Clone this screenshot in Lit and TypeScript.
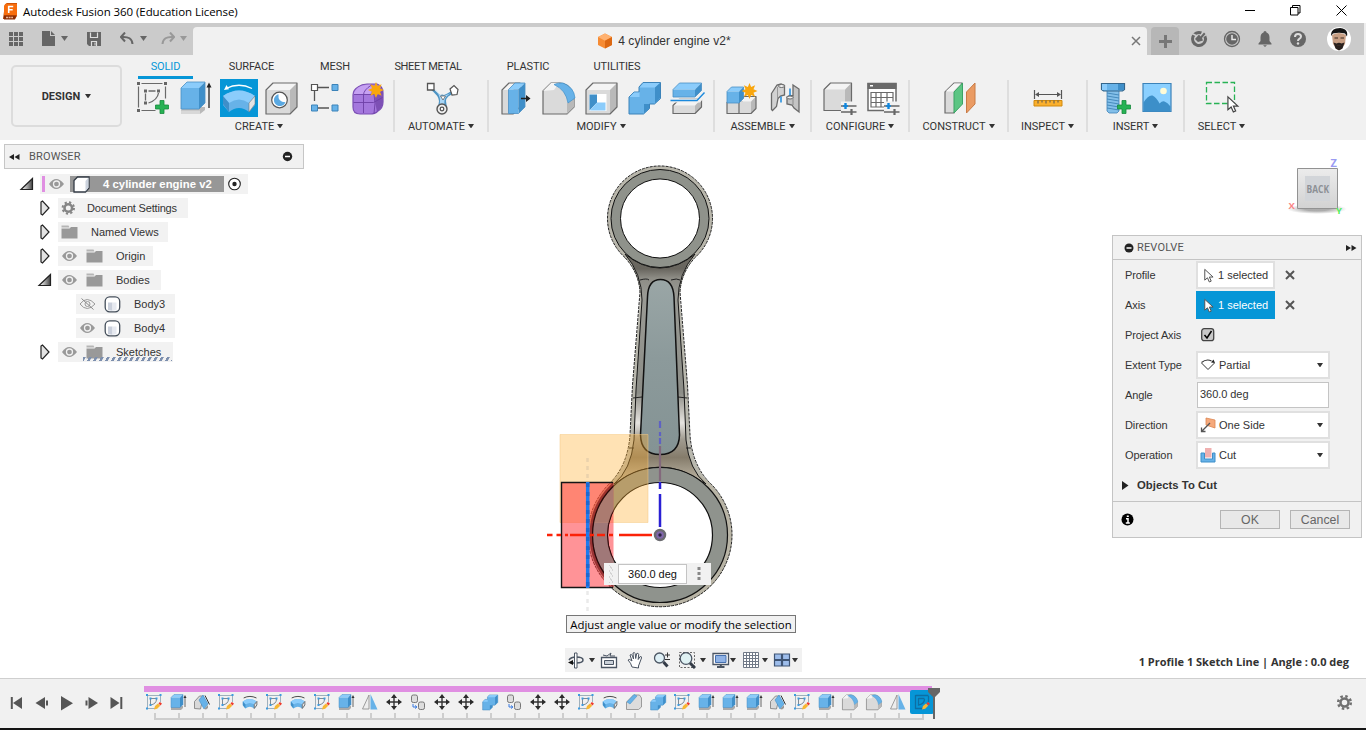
import { LitElement, html, svg, css } from "lit";
import { customElement } from "lit/decorators.js";

const DARK = "#6a6a6a";
const LIGHT = "#8bccfb";
const MID = "#67b2e8";
const DEEP = "#3f8fc9";

// Box seen from the front, with its top and right side visible.
const box = (x: number, y: number, w: number, h: number, d: number, f = "#dadada", t = "#f4f4f4", s = "#b9b9b9", k = DARK, sw = 1.2) => svg`
  <path d="M${x} ${y + d}l${d} ${-d}h${w}l${-d} ${d}z" fill=${t}/>
  <path d="M${x + w} ${y + d}l${d} ${-d}v${h}l${-d} ${d}z" fill=${s}/>
  <path d="M${x} ${y + d}h${w}v${h}h${-w}z" fill=${f}/>
  <path d="M${x} ${y + d}l${d} ${-d}h${w}v${h}l${-d} ${d}h${-w}z" fill="none" stroke=${k} stroke-width=${sw} stroke-linejoin="round"/>`;
const blueBox = (x: number, y: number, w: number, h: number, d: number, sw = 0.8) => box(x, y, w, h, d, MID, LIGHT, DEEP, "#4a8fc4", sw);
const plus = (x: number, y: number) => svg`<path d="M${x - 2} ${y - 6.5}h4v4.500h4.500v4h-4.500v4.500h-4v-4.500h-4.500v-4h4.500z" fill="#27b254" stroke="#188a3d" stroke-width=".8"/>`;
const star = (x: number, y: number) => {
  const p: string[] = [];
  for (let i = 0; i < 16; i++) {
    const r = i % 2 ? 4.3 : 8;
    const a = (i * Math.PI) / 8;
    p.push(`${x + r * Math.sin(a)},${y - r * Math.cos(a)}`);
  }
  return svg`<polygon points=${p.join(" ")} fill="#f9a60d"/>`;
};
const sliders = svg`
  <path d="M20 22.500h17v12h-17z" fill="#f1f1f1"/>
  <path d="M20 27h15.500M20 33h15.500" stroke="#666" stroke-width="1.500"/>
  <path d="M24.500 24v6" stroke="#1186dd" stroke-width="2.400"/><path d="M22 27h5" stroke="#1186dd" stroke-width="1.600"/>
  <path d="M30.500 30v6" stroke="#666" stroke-width="2.200"/>`;
const pointer = (fill = "#fff", stroke = "#333") => svg`<path d="M1 1v14l3.500-3 2.400 5.400 2.500-1.100-2.400-5.300h4.800z" fill=${fill} stroke=${stroke} stroke-width="1.300"/>`;

const revolveShape = (sw: number) => svg`
  <path d="M3 17Q19 6 35 17V26L29 33Q19 25 9 33L3 26z" fill=${MID}/>
  <path d="M3 17Q19 6 35 17L29 24Q19 17 9 24z" fill=${LIGHT}/>
  <path d="M3 17l6 7v9l-6-8z" fill=${DEEP}/>
  <path d="M35 17l-6 7v9l6-8z" fill="#e4e4e4" stroke=${DARK} stroke-width=${sw}/>`;

const icons: Record<string, unknown> = {
  sketch: svg`
    <path d="M4.500 7.500v21M7.500 4.500h21M31.500 7.500v12M7.500 31.500h14" stroke=${DARK} stroke-width="1.200" fill="none"/>
    <path d="M14.500 12h7M11.500 14.500v7M24.500 14q-1 7-10 10" stroke=${DARK} stroke-width="1.300" fill="none"/>
    <g fill="#666"><path d="M3 3h3v3h-3zM30 3h3v3h-3zM3 30h3v3h-3zM10 10.500h3v3h-3zM23 10.500h3v3h-3zM10 22.500h3v3h-3z"/></g>${plus(28, 28)}`,
  extrude: svg`<path d="M4 31l4-3h20v3l-5 4h-19z" fill="#b9b9b9"/><path d="M4 31.500h19v3.500h-19z" fill="#d8d8d8"/>
    ${blueBox(4, 3, 18, 21, 6)}<path d="M32 29v-23" stroke="#222" stroke-width="1.300"/><path d="M29.500 8.500l2.500-5 2.500 5z" fill="#222"/>`,
  revolve: svg`${revolveShape(0.5)}<path d="M6 9.500Q19 3 32 9.500" stroke="#fff" stroke-width="1.300" fill="none"/><path d="M4 11l2.500-5 2.500 4.300z" fill="#fff"/>`,
  hole: svg`${box(3, 4, 24, 24, 7)}<circle cx="16.500" cy="21" r="7.800" fill="#fff" stroke="#555" stroke-width="1.200"/>
    <path d="M15.500 15.200a6 6 0 1 0 7 8q-8 0-7-8z" fill="#5aa9e2"/>`,
  pattern: svg`<path d="M12 8.500h11M8.500 12v10M12 29h11" stroke="#555" stroke-width="1.300"/>
    <path d="M5.500 5.500h6v6h-6z" fill="#fff" stroke="#555" stroke-width="1.200"/><path d="M26 5.500h6v6h-6zM26 26h6v6h-6zM5.500 26h6v6h-6z" fill=${MID} stroke="#3c83b9"/>`,
  form: svg`<path d="M4 16q0-5 5-8 4-3 9-3h10q6 2 6 9v9q0 6-5 9-3 3-8 3h-10q-7 0-7-7z" fill="#a477dd" stroke="#7b4fb4" stroke-width="1.200"/>
    <path d="M5 14q2-5 7-7 4-1.500 9-1.500l4 2-4 8h-16z" fill="#c5a0f2"/><path d="M26 18l8-8v13q0 5-6 10-2-8-2-15z" fill="#7d50b5"/>
    <path d="M4.500 23.500h20l9-5M14.500 34v-18q0-5 8-10M5 15.500h20q2 8 0 19M25 15.500l8-7" stroke="#6d3fa6" stroke-width=".9" fill="none"/>${star(27, 11)}`,
  automate: svg`<path d="M9 8q7 8 8.500 8 1.500-1 3.500 0 3-1 9-5l2 3q-9 3-9 8l1 7h-9l1-7q0-5-9-12z" fill="#4d94c4"/>
    <path d="M12 10q5 6 6 6.500 2 0 3 .2 4-1 8-3.500-7 4-7.500 8l-.3 6h-4.500l.3-6q0-5-5-11z" fill="#a9d6f6"/><path d="M17.500 17h5l-2.500 4z" fill="#fff" stroke="#555" stroke-width=".7"/>
    <path d="M4.500 4.500h6.500v6.500h-6.500z" fill="#fff" stroke="#555" stroke-width="1.300"/><path d="M27 10l4-3.500 4 4-1 5-5 .5z" fill="#fff" stroke="#555" stroke-width="1.200"/>
    <circle cx="19" cy="30" r="5" fill="#eee" stroke="#555" stroke-width="1.400"/><circle cx="19" cy="30" r="1.800" fill="#fff" stroke="#555" stroke-width="1.300"/>`,
  presspull: svg`${box(5, 4, 11, 24, 7)}<g>${blueBox(11.5, 4, 10, 24, 6.5)}</g><path d="M24 19.500h8" stroke="#222" stroke-width="1.500"/><path d="M29 16l4.500 3.500-4.500 3.500z" fill="#222"/>`,
  fillet: svg`<path d="M3 12l8-8h9q12 1 14 16v8l-7 7h-24z" fill="#dadada" stroke=${DARK} stroke-width="1.200"/><path d="M3 12l8-8h8l-5 7z" fill="#f4f4f4"/>
    <path d="M27 24l7-4v8l-7 7z" fill="#b9b9b9"/><path d="M14 5.500q4-2 9-1.500 11 4 12 15l-7 5q-2-13-14-18.500z" fill=${MID} stroke=${DEEP} stroke-width=".7"/>`,
  shell: svg`${box(3, 4, 24, 24, 7)}<path d="M6.500 15h17v17h-17z" fill="#fff"/><path d="M6.500 15.500h7.500v8l-7.500 8z" fill=${DEEP}/><path d="M7 31.500l7-8h8.500v8z" fill=${LIGHT}/>`,
  combine: svg`<path d="M3 18l5-5h5v-5l4-4.500h17.500v16l-6 5.500h-5v4.500l-6 5.500h-14.500z" fill=${MID} stroke="#3c83b9"/>
    <path d="M3.500 18l4.500-4.500h5.500v4.500zM13.500 8.500l4-4.500h16.500l-5 4.500z" fill=${LIGHT}/><path d="M29 8.500l5-4.500v15l-5 5.500zM18 25h5v4.500l-5 5z" fill=${DEEP}/>`,
  split: svg`${box(4, 20, 22, 8, 6.5)}<path d="M2 19.500h27l8-9v6l-6 7h-29z" fill="#f1f1f1"/>${blueBox(4, 4, 22, 7.5, 6.5)}<path d="M1.500 21.500h26.500l7.500-8" stroke="#1c8add" stroke-width="1.400" fill="none"/>`,
  newcomp: svg`${box(4, 20.5, 12, 11, 3)}${box(16, 17.5, 12, 12, 5)}<g>${blueBox(4, 8, 12, 11.5, 4.5)}</g>${star(26.5, 12)}`,
  joint: svg`<path d="M5.500 14.500l5.500-8.500 4-1 3.500 1.500v9.500l-4 1-2.500 2.500-1.500 8-4 4-1-1z" fill="#d2d2d2" stroke=${DARK} stroke-width="1.300"/><path d="M11.500 8v11" stroke="#9a9a9a"/><ellipse cx="15.500" cy="7" rx="3" ry="1.500" fill="#f0f0f0" stroke=${DARK}/>
    <path d="M27 6l6 4v23l-5-4-2-3-5-1v-7l3-1.500 3 .5z" fill="#c4c4c4" stroke=${DARK} stroke-width="1.300"/><path d="M27 18v8" stroke="#8a8a8a"/><ellipse cx="24" cy="18.500" rx="3" ry="1.500" fill="#f0f0f0" stroke=${DARK}/><path d="M15 17.500v6M24 9.500v7" stroke="#1c8add" stroke-width="1.500"/>`,
  configbox: svg`${box(3, 4, 21, 21, 6.5)}${sliders}`,
  configtable: svg`<path d="M4 4.500h28v27h-28z" fill="#fff" stroke=${DARK} stroke-width="1.500"/><path d="M3.500 4h29v6h-29z" fill=${DARK}/><path d="M6 6h3v1.500h-3z" fill="#fff"/>
    <path d="M7 13.500h22v14.500h-22zM7 18.500h22M7 23.500h22M12 13.500v14.500M17 13.500v14.500M23 13.500v14.500" fill="none" stroke=${DARK} stroke-width="1.200"/>${sliders}`,
  plane: svg`<path d="M4 13l9-9h8v8l-8 22h-9z" fill="#dadada" stroke=${DARK} stroke-width="1.200"/><path d="M4.500 12.500l8.500-8h7l-8 8z" fill="#f5f5f5"/>
    <path d="M13 13l8.500-9v21l-8.500 9z" fill="#5cc583" stroke="#3aa364"/><path d="M25.500 13l8.500-9v21l-8.500 9z" fill="#ea9b63" stroke="#c87a45"/>`,
  measure: svg`<g transform="translate(-1 -1)"><path d="M5.500 12v9M32.500 12v9M7 16.500h24" stroke="#555" stroke-width="1.200"/><path d="M6 16.500l4-2.500v5zM32 16.500l-4-2.500v5z" fill="#555"/>
    <path d="M5 22.500h28v5.500h-28z" fill="#fbb02d" stroke="#d18a0e"/><path d="M9 22.500v3M13 22.500v2M17 22.500v3M21 22.500v2M25 22.500v3M29 22.500v2" stroke="#555"/></g>`,
  screw: svg`<g transform="translate(1 -1)"><path d="M10 12h12v21l-2 2h-8l-2-2z" fill="#83bfe9" stroke="#3f84b7" stroke-width=".8"/><path d="M10 15l12 2M10 18l12 2M10 21l12 2M10 24l12 2M10 27l12 2M10 30l12 2" stroke="#3f84b7" stroke-width=".9"/>
    <path d="M4.500 5.500h23v6l-2 1.500h-19l-2-1.500z" fill=${MID} stroke="#34668c" stroke-width="1.200"/><path d="M5 6h5v6h-5z" fill=${LIGHT}/><path d="M21 6h6v6h-6z" fill=${DEEP}/>${plus(27, 29)}</g>`,
  image: svg`<g transform="translate(-1.500 -.5)"><path d="M5.500 5h28v28h-28z" fill="#8bd0ff" stroke="#3c83b9" stroke-width="1.200"/><path d="M6 24q5-8 9-7 4 2 7 8 3-3 5-2 3 1 6 5v5h-27z" fill="#3c8fc9"/><circle cx="26" cy="12.500" r="3.300" fill="#fffbd6"/></g>`,
  select: svg`<g transform="translate(-2 0)"><path d="M4.500 3.500h28v21h-28z" fill="none" stroke="#27b254" stroke-width="1.300" stroke-dasharray="5.500 2.500"/><g transform="translate(25 17) scale(.92)">${pointer("#fff", "#444")}</g></g>`,
};

const small: Record<string, unknown> = {
  sketch: svg`<path d="M1.500 1.500h13M1.500 1v14M1 14.500h9M14.500 2v6" stroke="#9fb0bc" fill="none"/><path d="M4.500 4.500h6M4.500 4v7q6-1 6-6" stroke="#7d8b96" fill="none"/>
    <path d="M0 0h2v2h-2zM13.500 0h2v2h-2zM0 13.500h2v2h-2zM3.500 3.500h2v2h-2zM9.500 3.500h2v2h-2zM3.500 10h2v2h-2z" fill="#3d9be0"/><path d="M8 15.500l1-3.500 3-2.500 2.200 2.200-3 3z" fill="#f7b733"/><path d="M12.500 9.300l1.500-1.300 2 1.800-1.700 1.700z" fill="#ee3a2c"/>`,
  current: svg`<path d="M1.500 1.500h13M1.500 1v14M1 14.500h9M14.500 2v6M4.500 4.500h6M4.500 4v7q6-1 6-6" stroke="#0d6ea3" stroke-width="1.300" fill="none"/><path d="M8 15.500l1-3.500 3-2.500 2.200 2.200-3 3z" fill="#f7b733"/><path d="M12.500 9.300l1.500-1.300 2 1.800-1.700 1.700z" fill="#ee3a2c"/>`,
  extrude: svg`<path d="M1 13l12-1v2l-2 2h-10z" fill="#aaa"/>${blueBox(1, 0.5, 9, 10, 3, 0.5)}<path d="M15 13v-10" stroke="#444" stroke-width=".8"/><path d="M13.500 4l1.500-3 1.500 3z" fill="#333"/>`,
  draft: svg`<path d="M.5 14.500v-7l5-5.500h4l-3 13z" fill="#d9d9d9" stroke="#777" stroke-width=".8"/><path d="M5 6l4-5 5 9-4 5z" fill=${MID} stroke=${DEEP} stroke-width=".6"/><path d="M11 1.500l4.500 9" stroke="#333"/><path d="M10 15l4-4v3l-2 1.500z" fill="#999"/>`,
  revolve: svg`<g transform="translate(-.5 0) scale(.44)">${revolveShape(2)}<path d="M5 9Q19 2 34 9" stroke="#333" stroke-width="2" fill="none"/></g>`,
  mirror: svg`<path d="M7 1v14h-6.500z" fill="#eee" stroke="#888" stroke-width=".8"/><path d="M8.500 0v15.500h7z" fill=${MID}/>`,
  move: svg`<path d="M8 2v12M2 8h12" stroke="#333" stroke-width="1.400"/><path d="M8 0l3 4h-6zM8 16l3-4h-6zM0 8l4-3v6zM16 8l-4-3v6z" fill="#2b2b2b"/>`,
  copy: svg`<rect x="1.500" y="1" width="6" height="7.500" rx="1.800" fill="#ddd" stroke="#777"/><rect x="8.500" y="8" width="6" height="7.500" rx="1.800" fill="#ddd" stroke="#777"/><path d="M3 10v3h3M5 11.500l2 1.500-2 1.500" stroke="#3a7be0" fill="none"/>`,
  combine: svg`<g transform="translate(-.8 -.8) scale(.48)">${icons.combine}</g>`,
  chamfer: svg`<path d="M.5 8l7-7h6l2 3v9l-3 2.500h-12z" fill="#dcdcdc" stroke="#888" stroke-width=".8"/><path d="M1 8l7-7.500 3 1.500-7 8z" fill=${MID} stroke=${DEEP} stroke-width=".5"/>`,
  fillet: svg`<g transform="translate(-1 -1) scale(.48)">${icons.fillet}</g>`,
};

const HISTORY = "sketch extrude draft sketch revolve sketch revolve sketch extrude mirror move copy move move combine copy move move sketch revolve chamfer combine sketch extrude extrude extrude draft sketch extrude fillet fillet mirror current".split(" ");

const GROUPS: { label: string; width: number; icons: string[] }[] = [
  { label: "CREATE", width: 270, icons: ["sketch", "extrude", "revolve", "hole", "pattern", "form"] },
  { label: "AUTOMATE", width: 94, icons: ["automate"] },
  { label: "MODIFY", width: 226, icons: ["presspull", "fillet", "shell", "combine", "split"] },
  { label: "ASSEMBLE", width: 97, icons: ["newcomp", "joint"] },
  { label: "CONFIGURE", width: 98, icons: ["configbox", "configtable"] },
  { label: "CONSTRUCT", width: 99, icons: ["plane"] },
  { label: "INSPECT", width: 79, icons: ["measure"] },
  { label: "INSERT", width: 97, icons: ["screw", "image"] },
  { label: "SELECT", width: 75, icons: ["select"] },
];

const TABS: { label: string; width: number }[] = [
  { label: "SOLID", width: 55 },
  { label: "SURFACE", width: 117 },
  { label: "MESH", width: 50 },
  { label: "SHEET METAL", width: 136 },
  { label: "PLASTIC", width: 64 },
  { label: "UTILITIES", width: 114 },
];

const caret = html`<svg class="caret" viewBox="0 0 7 5" width="6" height="4.500" preserveAspectRatio="none"><path d="M0 0h7l-3.500 5z" fill="currentColor"/></svg>`;
const ic = (size: number, body: unknown, vb = size) => html`<svg width=${size} height=${size} viewBox="0 0 ${vb} ${vb}">${body}</svg>`;

@customElement("fusion-titlebar")
export class FusionTitlebar extends LitElement {
  static styles = css`
    :host { display: block; font-family: "Liberation Sans", Arial, sans-serif; }
    svg { display: block; flex: none; }
    .title { height: 23px; display: flex; align-items: center; background: #fff; padding: 0 19.500px 0 3px; color: #000; }
    .name { font: 11.500px "Open Sans", sans-serif; letter-spacing: -.07px; margin-left: 5px; flex: 1; white-space: nowrap; }
    .win { display: flex; gap: 34.500px; margin-top: -3px; }
    .bar { display: flex; height: 32px; background: #cbcbcb; border-right: 2px solid #eee; box-sizing: border-box; color: #666; }
    .quick { width: 193px; display: flex; align-items: center; padding: 0 0 1px 8px; box-sizing: border-box; }
    .quick .caret { margin-left: 5px; width: 7px; height: 5px; }
    .quick .g1 { margin-left: 18px; }
    .quick .g2 { margin-left: 18px; }
    .quick .g3 { margin-left: 18px; }
    .quick .g4 { margin-left: 13px; }
    .faint { color: #999; }
    .tab { width: 954px; margin-top: 4px; background: #f1f1f1; border-radius: 4px 4px 0 0; display: flex; align-items: center; justify-content: center; position: relative; font-size: 12px; color: #333; gap: 5px; box-sizing: border-box; padding: 0 12px 0 0; white-space: nowrap; letter-spacing: .05px; }
    .close { position: absolute; right: 6px; top: 9px; }
    .add { width: 28px; margin: 4px 0 0 4px; background: #b7b7b7; border-radius: 4px 4px 0 0; display: grid; place-items: center; }
    .tools { display: flex; align-items: center; gap: 15px; margin-left: 11px; }
    .tools .avatar { margin-left: 5px; }
  `;
  render() {
    return html`
      <div class="title">
        <svg width="15" height="17" viewBox="0 0 15 17"><path d="M2 1.500l2-1.500h10v13l-2 3h-12z" fill="#a83c00"/><path d="M1 2.500l2-2h11v12h-13z" fill="#f76d0d"/><path d="M1 12.500h12l-1 4h-11z" fill="#8c2c03"/><path d="M3 14.500h7" stroke="#eab495" stroke-width="1.500" stroke-dasharray="2 .6"/><path d="M5.700 10v-6.500h4.500M6 6.800h3.700" fill="none" stroke="#fff" stroke-width="1.600"/></svg>
        <span class="name">Autodesk Fusion 360 (Education License)</span>
        <div class="win">
          <svg width="11" height="11"><path d="M0 5.500h10" stroke="#000"/></svg>
          <svg width="11" height="11"><path d="M.5 2.500h7.500v7.500h-7.500zM2.500 2.500v-2h7.500v7.500h-2" fill="none" stroke="#000"/></svg>
          <svg width="11" height="11"><path d="M.5 .5l10 10M10.500 .5l-10 10" stroke="#000"/></svg>
        </div>
      </div>
      <div class="bar">
        <div class="quick">
          <svg width="15" height="15"><path d="M1 1h4v4H1zM6 1h4v4H6zM11 1h4v4h-4zM1 6h4v4H1zM6 6h4v4H6zM11 6h4v4h-4zM1 11h4v4H1zM6 11h4v4H6zM11 11h4v4h-4z" fill="#666"/></svg>
          <svg class="g1" width="15" height="17"><path d="M1 1h8v5h5v10h-13z" fill="#666"/><path d="M10 1l4 4h-4z" fill="#666"/></svg>${caret}
          <svg class="g2" width="16" height="16"><path d="M1 1h14v14h-12l-2-2z" fill="#666"/><path d="M4.500 1.500v5h7v-5M5.500 15v-4.500h5v4.500" fill="none" stroke="#ddd" stroke-width="1.200"/><path d="M9 11.500v3" stroke="#ddd"/></svg>
          <svg class="g3" width="15" height="13"><path d="M5 .5l-4 4.500 4 4.500M1.500 5q10.500-1 11 7" fill="none" stroke="#666" stroke-width="2"/></svg>${caret}
          <svg class="g4" width="15" height="13"><path d="M10 .5l4 4.500-4 4.500M13.500 5q-10.500-1-11 7" fill="none" stroke="#999" stroke-width="2"/></svg><span class="faint">${caret}</span>
        </div>
        <div class="tab">
          <svg width="16" height="16"><path d="M8 .5l7 3.500v8l-7 3.500-7-3.500v-8z" fill="#f68b33"/><path d="M8 .5l7 3.500-7 3.700-7-3.700z" fill="#ffb170"/><path d="M15 4v8l-7 3.500v-7.800z" fill="#dc6812"/></svg>
          <span>4 cylinder engine v2*</span>
          <svg class="close" width="10" height="10"><path d="M1 1l8 8M9 1l-8 8" stroke="#777" stroke-width="1.500"/></svg>
        </div>
        <div class="add"><svg width="13" height="13"><path d="M6.500 0v13M0 6.500h13" stroke="#777" stroke-width="3"/></svg></div>
        <div class="tools">
          <svg width="18" height="18"><circle cx="9" cy="9" r="6.500" fill="none" stroke="#666" stroke-width="3" stroke-dasharray="35 6" transform="rotate(-25 9 9)"/><path d="M5 9l4-4.500 1.500 2 3.500-4 1.500 1.500-3.500 4 1 2.500-5 1.500z" fill="#666"/><path d="M1 3l6 3" stroke="#cbcbcb" stroke-width="1.500"/></svg>
          <svg width="18" height="18"><circle cx="9" cy="9" r="7.500" fill="none" stroke="#666" stroke-width="1.300"/><circle cx="9" cy="9" r="5.800" fill="#666"/><path d="M9 5v4.500h4" fill="none" stroke="#e8e8e8" stroke-width="1.500"/></svg>
          <svg width="18" height="18"><path d="M9 1q1.500 0 1.500 1.500 3 1 3 5v3.500l2 2.500v1h-13v-1l2-2.500v-3.500q0-4 3-5 0-1.500 1.500-1.500z" fill="#666"/><path d="M7 15.300h4l-2 1.700z" fill="#666"/></svg>
          <svg width="18" height="18"><circle cx="9" cy="9" r="8" fill="#666"/><path d="M6 7q0-3 3-3t3 2.500q0 1.500-1.700 2.300-1.300.8-1.300 2.200" fill="none" stroke="#ddd" stroke-width="2"/><circle cx="9" cy="13.500" r="1.200" fill="#ddd"/></svg>
          <svg class="avatar" width="24" height="24" viewBox="0 0 24 24"><circle cx="12" cy="12" r="12" fill="#fff"/><path d="M5 8q7-4 14 0l-1 9-4 5.500h-4l-4-5.500z" fill="#c79e83"/><path d="M4 9q-.5-6 5-7.500 6-1.500 9 1 3 2 2 7l-2-3q-6-1.500-12 0z" fill="#141414"/><path d="M6.500 15.500l3 1q2.500-1.500 5 0l3-1-2 6-3.500 2-3.500-2z" fill="#29211e"/><path d="M7.500 11h3.500M13.500 11h3.500M10 18.500h4" stroke="#3b2a22" stroke-width="1.200"/></svg>
        </div>
      </div>`;
  }
}

@customElement("fusion-ribbon")
export class FusionRibbon extends LitElement {
  static styles = css`
    :host { display: flex; height: 85px; background: #f1f1f1; font: 11px Roboto, sans-serif; color: #333; }
    svg { display: block; }
    .design { box-sizing: border-box; width: 111px; height: 62px; margin: 10px 3px 0 11px; border: 2px solid #dcdcdc; border-radius: 5px; display: flex; align-items: center; justify-content: center; gap: 5px; font-weight: 700; }
    .main { flex: 1; }
    .tabs { display: flex; height: 24px; box-sizing: border-box; padding-left: 13px; }
    .tab { padding-top: 5px; height: 23.500px; box-sizing: border-box; line-height: 13px; white-space: nowrap; text-align: center; letter-spacing: -.1px; }
    .wide { letter-spacing: -.38px; }
    .on { color: #0696d7; border-bottom: 3px solid #0696d7; }
    .groups { display: flex; height: 58px; }
    .group { box-sizing: border-box; display: flex; flex-direction: column; align-items: center; background: linear-gradient(#dedede, #dedede) no-repeat right 1px / 2px 52px; }
    .group:last-child { background: none; }
    .row { display: flex; gap: 5px; height: 38px; }
    .active { background: #0696d7; }
    .label { display: flex; align-items: center; gap: 3px; margin-top: 2.500px; line-height: 13px; margin-left: -2px; }
  `;
  render() {
    return html`
      <div class="design"><span>DESIGN</span>${caret}</div>
      <div class="main">
        <div class="tabs">
          ${TABS.map((t, i) => html`<div class="tab ${i ? "" : "on"} ${i === 3 ? "wide" : ""}" style="width:${t.width}px">${t.label}</div>`)}
        </div>
        <div class="groups">
          ${GROUPS.map((g) => html`<div class="group" style="width:${g.width}px">
            <div class="row">${g.icons.map((n) => html`<div class=${n === "revolve" ? "active" : ""}>${ic(38, icons[n])}</div>`)}</div>
            <div class="label"><span>${g.label}</span>${caret}</div>
          </div>`)}
        </div>
      </div>`;
  }
}

type Node = { text: string; depth: number; width: number; arrow: string; icons: string[]; cls?: string };
const TREE: Node[] = [
  { text: "Document Settings", depth: 1, width: 130, arrow: "closed", icons: ["gear"], cls: "near" },
  { text: "Named Views", depth: 1, width: 110, arrow: "closed", icons: ["folder"] },
  { text: "Origin", depth: 1, width: 95, arrow: "closed", icons: ["eye", "folder"] },
  { text: "Bodies", depth: 1, width: 103, arrow: "open", icons: ["eye", "folder"] },
  { text: "Body3", depth: 2, width: 99, arrow: "", icons: ["hidden", "body"] },
  { text: "Body4", depth: 2, width: 99, arrow: "", icons: ["eye", "body"] },
  { text: "Sketches", depth: 1, width: 115, arrow: "closed", icons: ["eye", "folder"], cls: "hatched" },
];
const eye = svg`<path d="M1 8q7-10 15 0-8 10-15 0z" fill="#999"/><circle cx="8.500" cy="8" r="3" fill="none" stroke="#f1f1f1" stroke-width="1.300"/>`;
const treeIcons: Record<string, unknown> = {
  eye,
  hidden: svg`<path d="M1 8q7-9 15 0-8 9-15 0z" fill="none" stroke="#999"/><circle cx="8.500" cy="8" r="2.500" fill="none" stroke="#999"/><path d="M2.500 2.500l12 11" stroke="#888"/>`,
  folder: svg`<path d="M.5 1.500h7l1 2h-8z" fill="#b5b5b5"/><path d="M.5 4.500h8l1.500-1.500h6.500v11.500h-16z" fill="#999"/>`,
  gear: svg`<circle cx="7.300" cy="8" r="3.800" fill="none" stroke="#858585" stroke-width="2.600"/><circle cx="7.300" cy="8" r="5.700" fill="none" stroke="#858585" stroke-width="2" stroke-dasharray="2.240 2.240"/>`,
  body: svg`<rect x="1.200" y=".8" width="14.500" height="15" rx="4.500" fill="#fff" stroke="#454f5b" stroke-width="1.300"/><path d="M4 6.500h4.500v8.200q-2.500 0-4.500-.8z" fill="#c9cfdb"/><path d="M8.500 6.500h4v7.500q-2 .7-4 .7z" fill="#e6e9f0"/>`,
  arrowclosed: svg`<path d="M4 2v12l1.500 1 6.500-7-6.500-7z" fill="#e3e3e3" stroke="#222" stroke-width="1.200"/>`,
  arrowopen: svg`<path d="M13.500 2.500v11h-11.500z" fill="url(#g)" stroke="#222" stroke-width="1.200"/><defs><linearGradient id="g"><stop offset=".1" stop-color="#fff"/><stop offset="1" stop-color="#444"/></linearGradient></defs>`,
};

@customElement("fusion-browser")
export class FusionBrowser extends LitElement {
  static styles = css`
    :host { display: block; width: 300px; font: 11px "Liberation Sans", Arial, sans-serif; color: #333; }
    svg { display: block; }
    .head { display: flex; align-items: center; height: 25px; box-sizing: border-box; border: 1px solid #c6c6c6; background: #f1f1f1; padding: 0 10px 0 4px; font-family: Roboto, sans-serif; letter-spacing: .15px; color: #555; margin-bottom: 3px; }
    .head span { flex: 1; margin-left: 9px; }
    .line { display: flex; height: 24px; align-items: center; }
    .arrow { width: 18px; display: flex; justify-content: center; }
    .d0 { padding-left: 15px; }
    .d0 .arrow { width: 16px; margin-right: 5px; }
    .d1 { padding-left: 32px; }
    .d1 .arrow { margin-right: 4px; }
    .d2 { padding-left: 54px; }
    .d2 .arrow { display: none; }
    .d2 .item { margin-left: 18px; }
    .item { height: 20px; background: #f2f2f2; display: flex; align-items: center; white-space: nowrap; position: relative; }
    .cell { width: 22px; margin-right: 3px; display: flex; justify-content: center; }
    .text { margin-left: 8px; }
    .near .text { margin-left: 4px; letter-spacing: -.18px; }
    .root { width: 208px; }
    .pink { width: 3px; height: 16px; background: #e08fe2; margin: 0 3px 0 2px; }
    .pick { background: #979797; height: 16px; width: 154px; margin: 0 4px 0 5px; display: flex; align-items: center; color: #fff; font-weight: 700; font-size: 11.300px; letter-spacing: .04px; gap: 13px; box-sizing: border-box; padding-left: 3px; }
    .hatched .hatch { position: absolute; left: 25px; bottom: 1px; width: 89px; height: 4px; background: repeating-linear-gradient(120deg, #7c8fae 0 2.200px, transparent 2.800px 5.200px); }
  `;
  render() {
    return html`
      <div class="head">
        <svg width="11" height="8"><path d="M5 1v6l-5-3zM10.500 1v6l-5-3z" fill="#222"/></svg><span>BROWSER</span>
        <svg width="11" height="11"><circle cx="5.500" cy="5.500" r="4.700" fill="#222"/><path d="M3 5.500h5" stroke="#fff" stroke-width="1.500"/></svg>
      </div>
      <div class="line d0"><div class="arrow">${ic(16, treeIcons.arrowopen)}</div>
        <div class="item root"><i class="pink"></i>${ic(17, eye)}
          <div class="pick"><svg width="17" height="17"><path d="M1 4.500l3.500-3.500h11.500v11l-3.500 4h-11.500z" fill="#fff" stroke="#333b45" stroke-width="1.300"/><path d="M12.500 5l3-3.500v10l-3 4z" fill="#ccd3de"/></svg><span>4 cylinder engine v2</span></div>
          <svg width="14" height="14"><circle cx="6.500" cy="7" r="5.800" fill="#fff" stroke="#222" stroke-width="1.100"/><circle cx="6.500" cy="7" r="2.200" fill="#222"/></svg>
        </div>
      </div>
      ${TREE.map((n) => html`<div class="line d${n.depth}">
        <div class="arrow">${n.arrow ? ic(16, treeIcons["arrow" + n.arrow]) : ""}</div>
        <div class="item ${n.cls ?? ""}" style="width:${n.width}px">
          ${n.icons.map((i) => html`<div class="cell">${ic(17, treeIcons[i])}</div>`)}<span class="text">${n.text}</span>
          ${n.cls === "hatched" ? html`<i class="hatch"></i>` : ""}
        </div>
      </div>`)}`;
  }
}

@customElement("fusion-dialog")
export class FusionDialog extends LitElement {
  static styles = css`
    :host { display: block; box-sizing: border-box; width: 250px; height: 303px; background: #f1f1f1; border: 1px solid #c4c4c4; font: 11px "Liberation Sans", Arial, sans-serif; color: #333; }
    svg { display: block; }
    .head { display: flex; align-items: center; height: 23px; border-bottom: 1px solid #c4c4c4; padding: 0 4px 0 11px; font: 11px Roboto, sans-serif; letter-spacing: .15px; color: #555; }
    .head span { flex: 1; margin-left: 3px; }
    .line { display: flex; align-items: center; height: 30px; padding-left: 12px; }
    .label { width: 71px; letter-spacing: -.1px; white-space: nowrap; }
    .field { box-sizing: border-box; height: 28px; width: 134px; background: #fff; border: 2px solid #e0e0e0; display: flex; align-items: center; padding: 0 5px 0 1.500px; gap: 3.500px; white-space: nowrap; }
    .field span { flex: 1; }
    .pick { width: 79px; padding: 0 4px 0 6px; gap: 4px; margin-right: 10px; }
    .on { background: #0696d7; border-color: #0696d7; color: #fff; }
    .num { height: 26px; width: 132px; margin-left: 1px; border: 1px solid #c4c4c4; padding: 0 0 2px 2px; letter-spacing: -.05px; }
    .check { margin-left: 5px; }
    .bold { font-weight: 700; padding-left: 9px; gap: 8px; font-size: 11.300px; letter-spacing: .03px; }
    .foot { border-top: 1px solid #c4c4c4; margin-top: 1px; display: flex; align-items: center; height: 35px; padding: 0 11px 0 8px; gap: 10px; }
    .foot svg { margin-right: auto; }
    .btn { box-sizing: border-box; width: 60px; height: 19px; border: 1px solid #b4b4b4; background: #e8e8e8; color: #666; font-size: 12.300px; display: grid; place-items: center; }
  `;
  render() {
    const x = html`<svg width="10" height="10"><path d="M1 1l8 8M9 1l-8 8" stroke="#555" stroke-width="2"/></svg>`;
    const cursor = html`<svg width="10" height="15" viewBox="0 0 13 18">${pointer("#fff", "#555")}</svg>`;
    const drop = (label: string, value: string, icon: unknown) => html`<div class="line"><span class="label">${label}</span><div class="field">${ic(16, icon)}<span>${value}</span>${caret}</div></div>`;
    return html`
      <div class="head"><svg width="10" height="10"><circle cx="5" cy="5" r="4.500" fill="#222"/><path d="M2.500 5h5" stroke="#fff" stroke-width="1.500"/></svg><span>REVOLVE</span><svg width="11" height="8"><path d="M0 1v6l5-3zM5.500 1v6l5-3z" fill="#222"/></svg></div>
      <div class="line"><span class="label">Profile</span><div class="field pick">${cursor}<span>1 selected</span></div>${x}</div>
      <div class="line"><span class="label">Axis</span><div class="field pick on">${cursor}<span>1 selected</span></div>${x}</div>
      <div class="line"><span class="label">Project Axis</span><svg class="check" width="14" height="14"><rect x=".7" y=".7" width="12" height="12" rx="2.500" fill="#c8c8c8" stroke="#444" stroke-width="1.300"/><path d="M3.500 7l2.500 3 4.500-7" fill="none" stroke="#000" stroke-width="1.500"/></svg></div>
      ${drop("Extent Type", "Partial", svg`<path d="M1.500 6l6.500 6.500 6.500-6.500" fill="none" stroke="#333"/><path d="M1.500 5.500q5-4 10-1.500" fill="none" stroke="#333" stroke-width="1.100"/><path d="M15 6l-4-.5 2.500-3z" fill="#222"/>`)}
      <div class="line"><span class="label">Angle</span><div class="field num">360.0 deg</div></div>
      ${drop("Direction", "One Side", svg`<path d="M6 1l9 2v8l-9-3z" fill="#f5a97c" stroke="#dc8551" stroke-width=".8"/><path d="M10 6l-8 8M1.500 10.500v4h4" fill="none" stroke="#555" stroke-width="1.300"/>`)}
      ${drop("Operation", "Cut", svg`<path d="M1 6h3.500v6h8v-6h2.500v9h-14z" fill=${MID} stroke=${DEEP}/><path d="M5 1h6.500v9.500h-6.500z" fill="#f0b0b0"/>`)}
      <div class="line bold"><svg width="7" height="9"><path d="M0 0l6.500 4.500-6.500 4.500z" fill="#222"/></svg>Objects To Cut</div>
      <div class="foot"><svg width="13" height="13"><circle cx="6.500" cy="6.500" r="6" fill="#000"/><path d="M5 5.800h2v4M4.800 10h4M5.800 3.200h2" fill="none" stroke="#fff" stroke-width="1.500"/></svg><div class="btn">OK</div><div class="btn">Cancel</div></div>`;
  }
}

@customElement("fusion-navbar")
export class FusionNavbar extends LitElement {
  static styles = css`
    :host { display: flex; align-items: center; box-sizing: border-box; width: 237px; height: 24px; background: #f1f1f1; color: #333; padding-left: 2px; }
    svg { display: block; flex: none; }
    .s1 { margin-left: 1px; } .s2 { margin-left: 2px; } .s4 { margin-left: 4px; } .s5 { margin-left: 5px; } .s6 { margin-left: 6px; } .s8 { margin-left: 7.500px; } .s9 { margin-left: 9px; }
  `;
  render() {
    const s = "#4b5563";
    return html`
      ${ic(18, svg`<path d="M2 9q2-3 7-3 7 0 7 3t-7 3h-4" fill="none" stroke=${s} stroke-width="1.500"/><path d="M7.500 2h2.500v15h-2.500z" fill="#fff" stroke=${s}/><path d="M1 11.500l5-2.500v5z" fill="#111"/>`)}<span class="s4"></span>${caret}<span class="s5"></span>
      ${ic(18, svg`<path d="M3 4l4 1 4-3-1 3h5" fill="none" stroke=${s}/><path d="M1.500 6.500h15v10h-15z" fill="#fff" stroke=${s} stroke-width="1.300"/><path d="M4.500 9.500h9v4h-9z" fill="#cbd1d9" stroke=${s}/>`)}<span class="s9"></span>
      ${ic(18, svg`<path d="M5 16q-1-4-4-7 1.500-1.500 4 1l-2-6q1.500-1.500 2.500 1l1 3-.5-6q1.500-1 2.200.5l.5 5 1-5q1.500-.8 2 .7l-.5 5.300 2-3q1.500-.3 1.300 1.500l-3 8v2z" fill="#fff" stroke=${s}/>`)}<span class="s8"></span>
      ${ic(18, svg`<circle cx="6.500" cy="7" r="5" fill="#dff0f6" stroke=${s} stroke-width="1.300"/><path d="M10.500 11l4 4.500" stroke="#333b47" stroke-width="3"/><path d="M12 4h5M14.500 1.500v5M12 8.500h5" stroke="#333"/>`)}<span class="s8"></span>
      ${ic(18, svg`<path d="M1.500 1.500h15v15h-15z" fill="none" stroke="#666" stroke-dasharray="2 1.500"/><circle cx="8" cy="7.500" r="5.800" fill="#e0f2f4" stroke=${s} stroke-width="1.300"/><path d="M12 12l5 5" stroke="#333b47" stroke-width="3"/>`)}<span class="s4"></span>${caret}<span class="s6"></span>
      ${ic(18, svg`<path d="M1 2.500h15.500v11h-15.500z" fill="#fff" stroke=${s} stroke-width="1.300"/><path d="M3.500 4.500h10.500v7h-10.500z" fill="#8fb2e6" stroke="#4670ae"/><path d="M5 16h7.500M8.800 14v2" stroke=${s} stroke-width="2"/>`)}${caret}<span class="s6"></span>
      ${ic(18, svg`<path d="M1.500 1.500h15v15h-15zM4.500 1v16M7.500 1v16M10.500 1v16M13.500 1v16M1 4.500h16M1 7.500h16M1 10.500h16M1 13.500h16" fill="#fff" stroke="#707987"/>`)}<span class="s2"></span>${caret}<span class="s5"></span>
      ${ic(18, svg`<path d="M1.500 3h7v5.500h-7zM9.500 3h7v5.500h-7zM1.500 9.500h7v5.500h-7zM9.500 9.500h7v5.500h-7z" fill="#9dbdeb" stroke="#3e5474" stroke-width="1.200"/>`)}<span class="s1"></span>${caret}`;
  }
}

@customElement("fusion-timeline")
export class FusionTimeline extends LitElement {
  static styles = css`
    :host { display: flex; box-sizing: border-box; height: 52px; background: #f1f1f1; border-top: 1px solid #cfcfcf; border-bottom: 2px solid #141414; position: relative; }
    svg { display: block; overflow: visible; }
    .controls { display: flex; flex: none; gap: 9px; width: 144px; padding: 16px 0 0 9px; box-sizing: border-box; height: 34px; }
    .track { width: 788px; padding-top: 7px; flex: none; }
    .bar { height: 6px; background: #e08fe2; }
    .steps { display: grid; grid-template-columns: repeat(33, 24px); margin-left: -2px; }
    .step { height: 24px; box-sizing: border-box; padding: 2px 4px 0; width: 24px; }
    .on { background: #0696d7; margin-top: -2px; padding-top: 4px; border-radius: 2px; }
    .ticks { box-sizing: border-box; width: 770px; margin: -4px 0 0 10px; height: 8px; border-bottom: 2px solid #cdcdcd; background: repeating-linear-gradient(90deg, #cdcdcd 0 2px, transparent 2px 24px) 0 1px no-repeat; }
    .marker { position: absolute; left: 928px; top: 9px; }
    .gear { margin: 15px 13px 0 auto; }
  `;
  render() {
    const c = (b: unknown) => ic(16, b);
    return html`
      <div class="controls">
        ${c(svg`<path d="M2.800 2v12" stroke="#555" stroke-width="2"/><path d="M13 2v12l-9-6z" fill="#555"/>`)}
        ${c(svg`<path d="M11 2v12l-9.500-6z" fill="#555"/><path d="M13 5.500v5" stroke="#555" stroke-width="2"/>`)}
        ${c(svg`<path d="M2 1v14.500l12-7.200z" fill="#555"/>`)}
        ${c(svg`<path d="M4.500 2v12l9.500-6z" fill="#555"/><path d="M2.500 5.500v5" stroke="#555" stroke-width="2"/>`)}
        ${c(svg`<path d="M12.300 2v12" stroke="#555" stroke-width="2"/><path d="M1.500 2v12l9-6z" fill="#555"/>`)}
      </div>
      <div class="track">
        <div class="bar"></div>
        <div class="steps">${HISTORY.map((n) => html`<div class="step ${n === "current" ? "on" : ""}">${c(small[n])}</div>`)}</div>
        <div class="ticks"></div>
      </div>
      <svg class="marker" width="13" height="32"><path d="M0 0h12v4l-5 5v22h-2v-22l-5-5z" fill="#666"/></svg>
      <svg class="gear" width="17" height="17"><circle cx="8.500" cy="8.500" r="4" fill="none" stroke="#707070" stroke-width="2.500"/><circle cx="8.500" cy="8.500" r="6.300" fill="none" stroke="#707070" stroke-width="2.500" stroke-dasharray="2.500 2.448"/></svg>`;
  }
}

@customElement("fusion-viewport")
export class FusionViewport extends LitElement {
  static styles = css`
    :host { display: block; position: relative; height: 538px; background: #fff; overflow: hidden; font: 11px "Liberation Sans", Arial, sans-serif; }
    svg { display: block; }
    .model { position: absolute; inset: 0; }
    fusion-browser { position: absolute; left: 4px; top: 4px; }
    fusion-dialog { position: absolute; left: 1112px; top: 95px; }
    fusion-navbar { position: absolute; left: 565px; top: 508px; }
    .angle { position: absolute; left: 604px; top: 423px; width: 107px; height: 22px; background: #f1f1f1; display: flex; align-items: center; }
    .grip { width: 4px; height: 18px; margin: 0 5px; background: repeating-linear-gradient(60deg, #d4d4d4 0 1px, transparent 1px 3px); }
    .value { box-sizing: border-box; width: 69px; height: 20px; border: 1px solid #c4c4c4; background: #fff; color: #111; display: grid; place-items: center; padding-bottom: 1px; }
    .dots { margin-left: 10px; }
    .tip { position: absolute; left: 566px; top: 475px; box-sizing: border-box; width: 230px; height: 18px; background: #f1f1f1; border: 1px solid #767676; color: #000; font: 11.400px/17px "Open Sans", sans-serif; text-align: center; white-space: nowrap; }
    .status { position: absolute; right: 17px; bottom: 8px; font: 700 11px/16px "Open Sans", sans-serif; color: #333; white-space: nowrap; }
  `;
  render() {
    const ring = (cy: number, R: number, r: number) => `M${660 - R} ${cy}a${R} ${R} 0 1 0 ${2 * R} 0a${R} ${R} 0 1 0 ${-2 * R} 0M${660 - r} ${cy}a${r} ${r} 0 1 0 ${2 * r} 0a${r} ${r} 0 1 0 ${-2 * r} 0z`;
    return html`
      <svg class="model" width="1366" height="538" viewBox="0 140 1366 538">
        <defs>
          <linearGradient id="shank" x1="0" x2="0" y1="255" y2="485" gradientUnits="userSpaceOnUse"><stop offset="0" stop-color="#6d6a62"/><stop offset=".06" stop-color="#68655e"/><stop offset=".1" stop-color="#8d8c85"/><stop offset=".18" stop-color="#9a9b95"/><stop offset=".6" stop-color="#8c8d87"/><stop offset=".66" stop-color="#b8b6b0"/><stop offset=".73" stop-color="#e6e4e0"/><stop offset=".8" stop-color="#a19c91"/><stop offset=".88" stop-color="#857c6b"/><stop offset="1" stop-color="#c7bfae"/></linearGradient>
          <linearGradient id="slot" x1="0" x2="0" y1="0" y2="1"><stop offset="0" stop-color="#9aa6a6"/><stop offset=".45" stop-color="#8c9a9b"/><stop offset="1" stop-color="#849394"/></linearGradient>
          <linearGradient id="bb" x1="0" x2="0" y1="0" y2="1"><stop offset="0" stop-color="#ececec"/><stop offset="1" stop-color="#d2d2d2"/></linearGradient>
          <radialGradient id="shade"><stop offset=".4" stop-color="#888" stop-opacity=".7"/><stop offset="1" stop-color="#999" stop-opacity="0"/></radialGradient>
          <clipPath id="profile"><path d="M561.500 482.500h52v105h-52z"/></clipPath>
        </defs>
        <path d="M622 254Q641 274 640 300L632.500 385 630 440Q627 468 607 487L713 487Q693 468 690 440L687.500 385 680 300Q679 274 698 254z" fill="#b9b8ae"/>
        <path d=${ring(218.5, 52.5, 39.5)} fill="#b9b7ac" fill-rule="evenodd"/>
        <path d=${ring(535, 72, 52.5)} fill="#b9b5a6" fill-rule="evenodd"/>
        <path d="M625 254Q642 274 642 300L636 390 634 440Q631 470 614 484Q638 467 660 467T706 484Q689 470 686 440L684 390 678 300Q678 274 695 254Q678 268 660 268T625 254z" fill="url(#shank)" stroke="#161616" stroke-width="1"/>
        <circle cx="660" cy="218.500" r="39.500" fill="#fff"/><circle cx="660" cy="535" r="52.500" fill="#fff"/>
        <path d=${ring(218.5, 49, 39.5)} fill="#8f928b" fill-rule="evenodd" stroke="#111"/>
        <path d=${ring(535, 67.5, 52.5)} fill="#8f938d" fill-rule="evenodd" stroke="#111" stroke-width="1.200"/>
        <path d="M625 257.600A52.500 52.500 0 1 1 695 257.600Q681 273 680 292L687.500 385 690 435Q692 464 709 482A72 72 0 1 1 611 482Q628 464 630 435L632.500 385 640 292Q639 273 625 257.600z" fill="none" stroke="#222" stroke-width="1" stroke-dasharray="3 1"/>
        <path d="M640 280q7-2 9 0M671 280q6-2 9 0M633 398l9-1M678 397l9 1M629 448l5 0M686 448h5" stroke="#222" fill="none"/>
        <path d="M647.500 297Q648 279.500 660.500 279.500T674 297L679.500 435Q679 454.500 660 454.500T640.500 435z" fill="url(#slot)" stroke="#111" stroke-width="1.500"/>
        <path d="M560 434.500h88v88h-88z" fill="#ffb030" fill-opacity=".36" stroke="#f5c983" stroke-opacity=".5"/>
        <path d="M561.500 482.500h52v105h-52z" fill="#ff3038" fill-opacity=".52"/>
        <g clip-path="url(#profile)" fill="none">
          <circle cx="660" cy="535" r="60" stroke="#6e9696" stroke-opacity=".45" stroke-width="15"/>
          <circle cx="660" cy="535" r="69" stroke="#7c1a1c" stroke-opacity=".7" stroke-width="3"/>
          <circle cx="660" cy="535" r="67.500" stroke="#2a0a0a" stroke-width="1.200"/>
          <circle cx="660" cy="535" r="52.500" stroke="#2a0a0a" stroke-width="1"/>
        </g>
        <path d="M613 482.500h-51.500v105h51.500" fill="none" stroke="#161616" stroke-width="1.400"/>
        <path d="M587.500 458v24M587.500 591v20" stroke="#8c8c8c" stroke-opacity=".18" stroke-width="2.500" stroke-dasharray="4 4"/>
        <path d="M660 421v7M660 432v4M660 438v6" stroke="#5f62c3" stroke-width="2.200"/><path d="M660 446v35" stroke="#83697c" stroke-width="2.200"/><path d="M660 482v7M660 494v33" stroke="#2a20d4" stroke-width="2.500"/>
        <path d="M547 535h5.500M556.500 535h4.500M565 535h3M570 535h24M597 535h8M609 535h4M619 535h33" stroke="#fb2208" stroke-width="2.400"/>
        <path d="M587.700 482v106" stroke="#1d7bef" stroke-width="3.500"/><path d="M587.700 483v104" stroke="#1a69d2" stroke-width="3.500" stroke-dasharray="4 5"/>
        <circle cx="660" cy="535" r="5" fill="#8167ac" stroke="#6b6b70" stroke-width="2.500"/><circle cx="660" cy="535" r="1.700" fill="#292140"/>
        <ellipse cx="1317" cy="209" rx="30" ry="5" fill="url(#shade)"/>
        <path d="M1297.500 168.500h40v40h-40z" fill="url(#bb)" stroke="#929292"/><path d="M1305 176h25v25h-25z" fill="#d2d5d9"/>
        <g font-family="Open Sans, sans-serif" font-weight="700"><text x="1306.500" y="193" font-size="11" textLength="22.500" lengthAdjust="spacingAndGlyphs" fill="#8c9095">BACK</text>
        <text x="1330.500" y="167" font-size="11" fill="#9a9bf2">Z</text><text x="1288.500" y="209" font-size="9.500" fill="#fa8585">X</text><text x="1336" y="214" font-size="9.500" fill="#52ef5c">Y</text></g>
      </svg>
      <fusion-browser></fusion-browser>
      <fusion-dialog></fusion-dialog>
      <div class="angle"><i class="grip"></i><div class="value">360.0 deg</div><svg class="dots" width="4" height="16"><path d="M.5 1h3v3h-3zM.5 6h3v3h-3zM.5 11h3v3h-3z" fill="#888"/></svg></div>
      <div class="tip">Adjust angle value or modify the selection</div>
      <fusion-navbar></fusion-navbar>
      <div class="status">1 Profile 1 Sketch Line | Angle : 0.0 deg</div>`;
  }
}

@customElement("app-root")
export class AppRoot extends LitElement {
  static styles = css`
    :host { display: flex; flex-direction: column; width: 1366px; height: 730px; overflow: hidden; background: #fff; }
  `;
  render() {
    return html`<fusion-titlebar></fusion-titlebar><fusion-ribbon></fusion-ribbon><fusion-viewport></fusion-viewport><fusion-timeline></fusion-timeline>`;
  }
}
